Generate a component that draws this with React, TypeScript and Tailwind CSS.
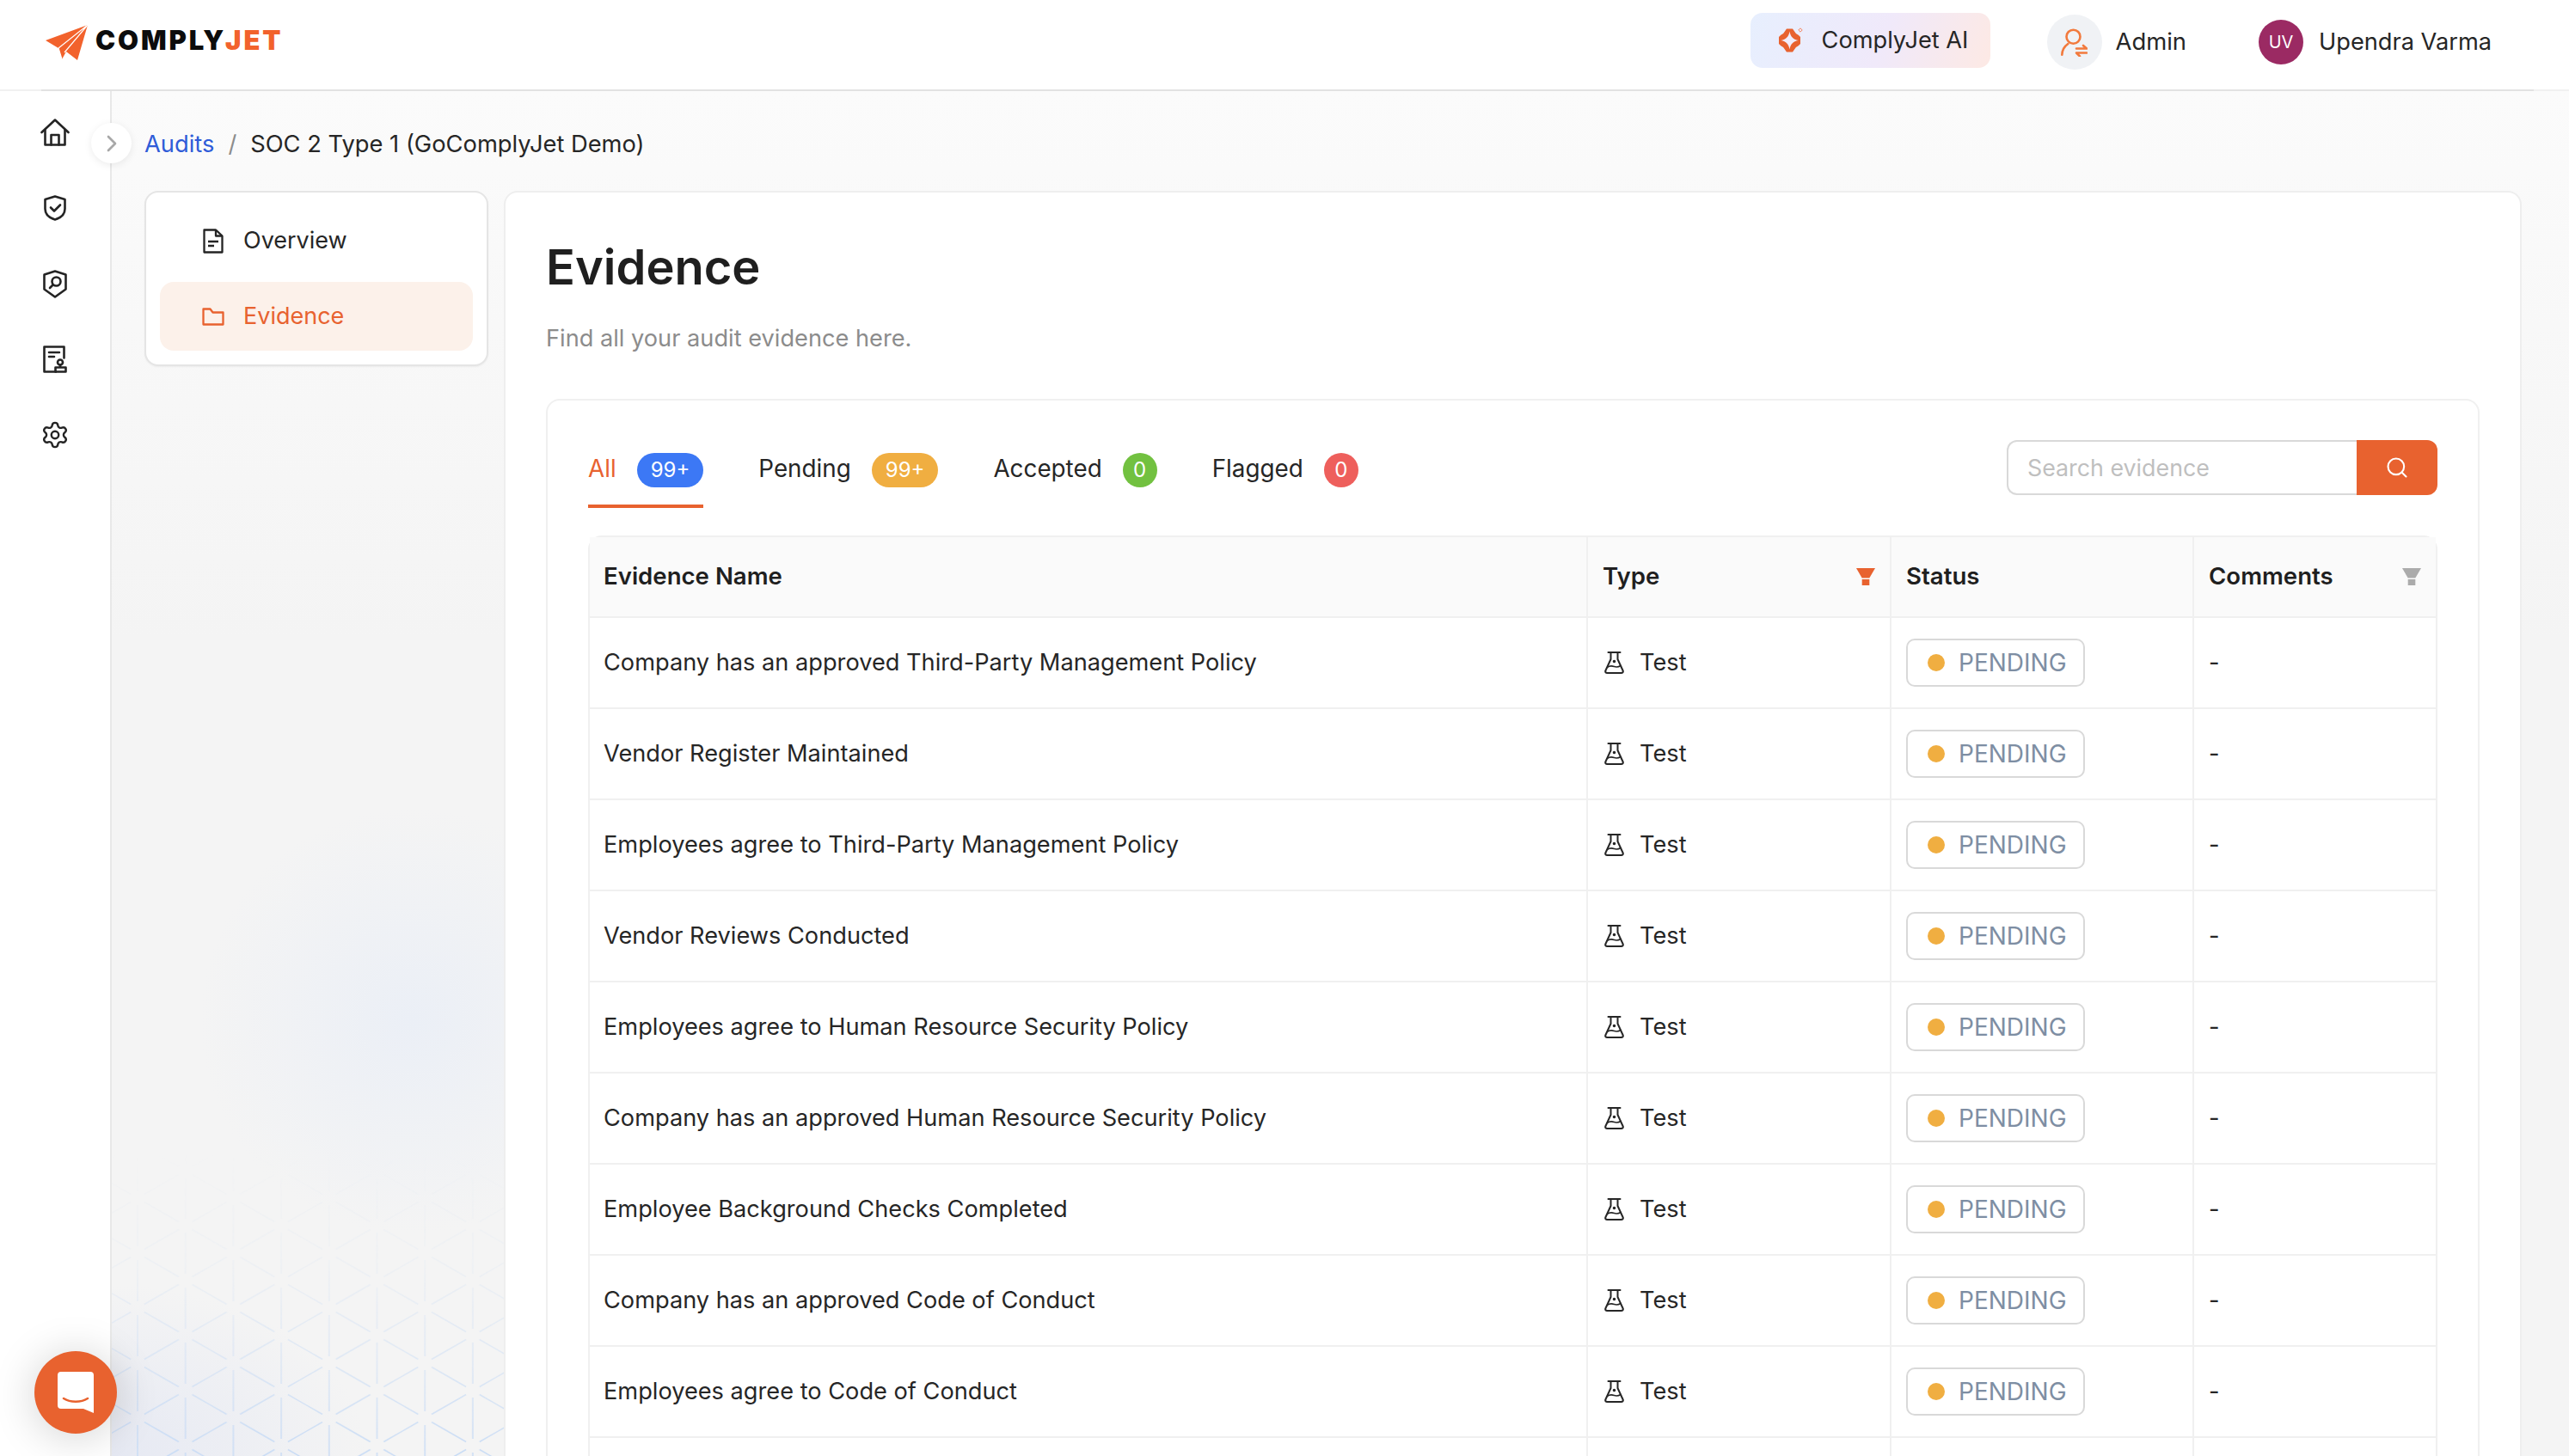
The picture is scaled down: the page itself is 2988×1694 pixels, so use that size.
import { Settings, Search, ChevronRight } from "lucide-react";

const rows = [
  "Company has an approved Third-Party Management Policy",
  "Vendor Register Maintained",
  "Employees agree to Third-Party Management Policy",
  "Vendor Reviews Conducted",
  "Employees agree to Human Resource Security Policy",
  "Company has an approved Human Resource Security Policy",
  "Employee Background Checks Completed",
  "Company has an approved Code of Conduct",
  "Employees agree to Code of Conduct",
];

const cols = "grid grid-cols-[1161px_353px_352px_1fr]";

function Plane() {
  return (
    <svg width="49" height="41" viewBox="0 0 49 41">
      <path d="M0 18 49 0 37 41 24 31 19 40 15 27Z" fill="#f2622c" />
      <path d="M49 0 15 27M49 0 22 32M15 27 19 40" stroke="#fff" strokeWidth="1.2" fill="none" />
    </svg>
  );
}

function AiIcon() {
  return (
    <svg width="30" height="30" viewBox="0 0 30 30">
      <path d="M11 1.500h7l3.500 5c1 1 2 1.500 3.500 2.500l2 2v8l-2 2c-1.500 1-2.500 1.500-3.500 2.500l-3.500 5h-7l-3.500-5C6.500 22.500 5.500 22 4 21l-2-2v-8l2-2c1.500-1 2.500-1.500 3.500-2.500Z" fill="#e8622f" />
      <path d="M14.500 4.500c1 6 4 9.400 10 10.500-6 1.100-9 4.500-10 10.500-1-6-4-9.400-10-10.500 6-1.100 9-4.500 10-10.500Z" fill="#f1ecfb" />
      <path d="M27 .8 29.200 3 27 5.200 24.800 3Z" fill="#f3ebf8" stroke="#f0865f" strokeWidth="1" />
    </svg>
  );
}

function AdminIcon() {
  return (
    <svg width="31" height="33" viewBox="0 0 31 33" fill="none" stroke="#f27a3d" strokeWidth="2.600" strokeLinecap="round" strokeLinejoin="round">
      <circle cx="14.500" cy="9.700" r="8" />
      <path d="M8.300 18C4 21 1.500 25 1.300 30.700" />
      <path d="M18 23.500h12l-4-3.500M30 28.500H18l4 4" />
    </svg>
  );
}

function HomeIcon() {
  return (
    <svg width="34" height="32" viewBox="0 0 34 32" fill="none" stroke="#242424" strokeWidth="2.600" strokeLinejoin="round" strokeLinecap="round">
      <path d="M1.500 16 17 1.500 32.500 16" />
      <path d="M5.500 13v17.500h23V13" />
      <path d="M12.500 30.500V19h9v11.500" />
    </svg>
  );
}

function ShieldCheck() {
  return (
    <svg width="26" height="30" viewBox="0 0 26 30" fill="none" stroke="#242424" strokeWidth="2.600" strokeLinejoin="round" strokeLinecap="round">
      <path d="M13 1.500 24.500 5v11c0 6.500-5 10.500-11.500 12.500C6.500 26.500 1.500 22.500 1.500 16V5Z" />
      <path d="m8 14.500 4 4 7-7" />
    </svg>
  );
}

function ShieldSearch() {
  return (
    <svg width="28" height="33" viewBox="0 0 28 33" fill="none" stroke="#242424" strokeWidth="2.600" strokeLinejoin="round" strokeLinecap="round">
      <path d="M14 1.500 26.500 5.500v17L14 31.500 1.500 22.500v-17Z" />
      <circle cx="15.500" cy="13.500" r="5" />
      <path d="m11.500 17.500-3.500 3.500" />
    </svg>
  );
}

function DocStamp() {
  return (
    <svg width="28" height="32" viewBox="0 0 28 32" fill="none" stroke="#242424" strokeWidth="2.600" strokeLinejoin="round" strokeLinecap="round">
      <path d="M15 30.500H1.500v-29h23v13" />
      <path d="M7 8h12M7 13h6" />
      <circle cx="20" cy="19.500" r="3" />
      <path d="M20 22.500V25M14.500 25.500h12v5h-12Z" />
    </svg>
  );
}

function OverviewIcon() {
  return (
    <svg width="24" height="29" viewBox="0 0 24 29" fill="none" stroke="#242424" strokeWidth="2.300" strokeLinejoin="round">
      <path d="M15 1.500H1.500v26h21V8.500Z" />
      <path d="M15 1.500v7h7.500M6 15h12M6 20h7" />
    </svg>
  );
}

function FolderIcon() {
  return (
    <svg width="26" height="21" viewBox="0 0 26 21" fill="none" stroke="#e8622f" strokeWidth="2.300" strokeLinejoin="round">
      <path d="M1.500 1.500h8l3 4h12v14h-23Z" />
    </svg>
  );
}

function Flask() {
  return (
    <svg width="23" height="26" viewBox="0 0 23 26" fill="none" stroke="#262626" strokeWidth="2" strokeLinejoin="round" strokeLinecap="round">
      <path d="M4.500 1h14M7.500 1v8L1.500 22c-.8 1.700 0 3 2 3h16c2 0 2.800-1.300 2-3L15.500 9V1" />
      <path d="M3.500 18.500c3-2.500 5-2 8-1s5 .5 7.500-1" strokeWidth="1.600" />
      <circle cx="11.500" cy="11.500" r=".8" fill="#262626" />
    </svg>
  );
}

function Funnel({ color }: { color: string }) {
  return (
    <svg width="22" height="20" viewBox="0 0 22 20" fill={color}>
      <path d="M0 0h22l-6.700 11.500H6.700Z" />
      <path d="M6.700 13h8.600v7H6.700Z" />
    </svg>
  );
}

function ChatIcon() {
  return (
    <svg width="42" height="48" viewBox="0 0 42 48">
      <path d="M4 0h34a4 4 0 0 1 4 4v44l-12-5H4a4 4 0 0 1-4-4V4a4 4 0 0 1 4-4Z" fill="#fff" />
      <path d="M7 31c8 5 20 5 28 0" fill="none" stroke="#e8622f" strokeWidth="2.600" strokeLinecap="round" />
    </svg>
  );
}

function Tab({ label, badge, color, active }: { label: string; badge: string; color: string; active?: boolean }) {
  return (
    <div className={`flex flex-col ${active ? "text-[#e8622f]" : "text-[#262626]"}`}>
      <div className="flex h-[40px] items-center gap-[24px]">
        <span className="pb-[4px] text-[27.8px] leading-[36px]">{label}</span>
        <span className={`flex h-[40px] min-w-[40px] items-center justify-center rounded-full text-[24px] leading-none text-white ${badge === "0" ? "px-0" : "px-[16px]"} ${color}`}>{badge}</span>
      </div>
      <div className={`mt-[20px] h-[4px] ${active ? "bg-[#e8622f]" : "bg-transparent"}`} />
    </div>
  );
}

export default function App() {
  return (
    <div className="relative flex h-[1694px] w-[2988px] flex-col overflow-hidden bg-white font-['Inter',sans-serif] text-[#262626]">
      <header className="flex h-[104px] items-center justify-between bg-white pb-[6px] pl-[53px] pr-[90px]">
        <div className="flex items-center gap-[9px]">
          <Plane />
          <span className="pb-[6px] text-[31px] font-black leading-none tracking-[2.900px]">
            <span className="text-[#0c0c0c]">COMPLY</span>
            <span className="text-[#f2622c]">JET</span>
          </span>
        </div>
        <div className="flex items-center">
          <button className="mb-[4px] flex h-[64px] w-[279px] items-center gap-[22px] rounded-[14px] bg-[linear-gradient(110deg,#e7effe_0%,#f0e9fa_55%,#fde9e4_100%)] pl-[31px] text-[27.2px]">
            <AiIcon />
            <span>ComplyJet AI</span>
          </button>
          <div className="ml-[66px] flex items-center gap-[16px]">
            <span className="flex h-[64px] w-[64px] items-center justify-center rounded-full bg-[#f0f2f5]">
              <AdminIcon />
            </span>
            <span className="text-[27.4px]">Admin</span>
          </div>
          <div className="ml-[84px] flex items-center gap-[18px]">
            <span className="flex h-[52px] w-[52px] items-center justify-center rounded-full bg-[#9b2a63] text-[20px] text-white">UV</span>
            <span className="text-[27.2px]">Upendra Varma</span>
          </div>
        </div>
      </header>
      <div className="h-[2px] bg-[#f1f1f1]">
        <div className="ml-[48px] mr-[41px] h-[2px] bg-[#e2e2e2]" />
      </div>

      <div className="flex min-h-0 flex-1">
        <aside className="flex w-[130px] shrink-0 flex-col items-center border-r-2 border-[#e8e8e8] bg-white pt-[32px]">
          <div className="flex h-[32px] items-center justify-center"><HomeIcon /></div>
          <div className="mt-[56px] flex h-[32px] items-center justify-center"><ShieldCheck /></div>
          <div className="mt-[56px] flex h-[32px] items-center justify-center"><ShieldSearch /></div>
          <div className="mt-[56px] flex h-[32px] items-center justify-center"><DocStamp /></div>
          <div className="mt-[56px] flex h-[32px] items-center justify-center">
            <Settings size={34} strokeWidth={1.700} color="#242424" />
          </div>
        </aside>

        <main className="relative min-w-0 flex-1 overflow-hidden bg-[linear-gradient(180deg,#fbfbfb_0%,#f4f4f4_40%)] pl-[38px] pr-[55px] pt-[40px]">
          <div className="absolute left-[0px] top-[732px] h-[700px] w-[700px] bg-[radial-gradient(circle,#ebeff6_0%,rgba(235,239,246,0)_50%)]" />
          <div className="absolute bottom-0 left-0 h-[200px] w-[300px] bg-[radial-gradient(ellipse_at_bottom_left,#e6e9f3_0%,rgba(230,233,243,0)_70%)]" />
          <svg width="456" height="440" className="absolute bottom-0 left-0 [mask-image:linear-gradient(to_top,black_0%,rgba(0,0,0,0.5)_25%,rgba(0,0,0,0.15)_50%,transparent_80%)]">
            <defs>
              <pattern id="tri" x="2.150" y="12" width="111.400" height="64" patternUnits="userSpaceOnUse">
                <path
                  d="M35.650 4.500 75.750 27.500M75.750 36.500 35.650 59.500M20.050 4.500-20.050 27.500M20.050 59.500-20.050 36.500M91.350 27.500 131.450 4.500M91.350 36.500 131.450 59.500M27.850 8V56M83.550 40V64M83.550 0V24"
                  stroke="#c9dcf5"
                  strokeWidth="1.500"
                  fill="none"
                />
              </pattern>
            </defs>
            <rect width="456" height="440" fill="url(#tri)" />
          </svg>

          <div className="relative">
            <nav className="flex h-[44px] items-center text-[27.3px]">
              <span className="text-[#2f5cd8]">Audits</span>
              <span className="mx-[16px] text-[#8c8c8c]">/</span>
              <span>SOC 2 Type 1 (GoComplyJet Demo)</span>
            </nav>

            <div className="mt-[32px] flex items-start gap-[18px]">
              <div className="w-[400px] shrink-0 rounded-[16px] border-2 border-[#e5e5e5] bg-white p-[16px] shadow-[0_1px_2px_rgba(0,0,0,0.05)]">
                <div className="flex h-[80px] items-center gap-[22px] pl-[49px] text-[27px]">
                  <span className="flex w-[26px] justify-center"><OverviewIcon /></span>
                  <span>Overview</span>
                </div>
                <div className="mt-[8px] flex h-[80px] items-center gap-[22px] rounded-[16px] bg-[#fcf1ea] pl-[49px] text-[27px] text-[#e8622f]">
                  <span className="flex w-[26px] justify-center"><FolderIcon /></span>
                  <span>Evidence</span>
                </div>
              </div>

              <section className="min-w-0 flex-1 rounded-t-[16px] border-2 border-[#eeeeee] bg-white px-[47px] pt-[51px]">
                <h1 className="text-[56px] font-semibold leading-[72px] text-[#1f1f1f]">Evidence</h1>
                <p className="mt-[27px] text-[27.2px] leading-[40px] text-[#8c8c8c]">Find all your audit evidence here.</p>

                <div className="mt-[50px] rounded-t-[16px] border-2 border-[#f0f0f0] px-[47px] pt-[46px]">
                  <div className="flex items-start justify-between">
                    <div className="mt-[15px] flex gap-[64px]">
                      <Tab label="All" badge="99+" color="bg-[#3c78f5]" active />
                      <Tab label="Pending" badge="99+" color="bg-[#f0ae41]" />
                      <Tab label="Accepted" badge="0" color="bg-[#72c140]" />
                      <Tab label="Flagged" badge="0" color="bg-[#ee5f5c]" />
                    </div>
                    <div className="flex h-[64px] w-[501px]">
                      <div className="flex flex-1 items-center rounded-l-[12px] border-2 border-r-0 border-[#d9d9d9] pl-[22px] text-[26.8px] text-[#bfbfbf]">Search evidence</div>
                      <div className="flex w-[94px] items-center justify-center rounded-r-[12px] bg-[#e8622f]">
                        <Search size={28} color="#fff" strokeWidth={1.800} />
                      </div>
                    </div>
                  </div>

                  <div className="mt-[32px] rounded-t-[16px] border-2 border-[#f0f0f0]">
                    <div className={`${cols} h-[94px] border-b-2 border-[#f0f0f0] bg-[#fafafa] text-[27.6px] font-semibold text-[#1f1f1f]`}>
                      <div className="flex items-center border-r-2 border-[#f0f0f0] pl-[16px]">Evidence Name</div>
                      <div className="flex items-center justify-between border-r-2 border-[#f0f0f0] pl-[17px] pr-[17px]">
                        <span>Type</span>
                        <Funnel color="#e8622f" />
                      </div>
                      <div className="flex items-center border-r-2 border-[#f0f0f0] pl-[17px]">Status</div>
                      <div className="flex items-center justify-between pl-[17px] pr-[17px]">
                        <span>Comments</span>
                        <Funnel color="#ababab" />
                      </div>
                    </div>
                    {rows.map((name) => (
                      <div key={name} className={`${cols} h-[106px] border-b-2 border-[#f0f0f0] text-[27.2px]`}>
                        <div className="flex items-center border-r-2 border-[#f0f0f0] pl-[16px]">{name}</div>
                        <div className="flex items-center gap-[18px] border-r-2 border-[#f0f0f0] pl-[19px]">
                          <Flask />
                          <span>Test</span>
                        </div>
                        <div className="flex items-center border-r-2 border-[#f0f0f0] pl-[17px]">
                          <div className="flex h-[56px] w-[208px] items-center gap-[16px] rounded-[10px] border-2 border-[#d9d9d9] pl-[23px]">
                            <span className="h-[20px] w-[20px] rounded-full bg-[#f0ae41]" />
                            <span className="text-[28px] text-[#7e8ea3]">PENDING</span>
                          </div>
                        </div>
                        <div className="flex items-center pl-[17px]">-</div>
                      </div>
                    ))}
                    <div className={`${cols} h-[106px]`}>
                      <div className="border-r-2 border-[#f0f0f0]" />
                      <div className="border-r-2 border-[#f0f0f0]" />
                      <div className="border-r-2 border-[#f0f0f0]" />
                      <div />
                    </div>
                  </div>
                </div>
              </section>
            </div>
          </div>
        </main>
      </div>

      <button className="absolute left-[106px] top-[143px] flex h-[47px] w-[47px] items-center justify-center rounded-full bg-white shadow-[0_2px_10px_rgba(0,0,0,0.08)]">
        <ChevronRight size={32} color="#a8a8a8" strokeWidth={2} />
      </button>

      <button className="absolute left-[40px] top-[1572px] flex h-[96px] w-[96px] items-center justify-center rounded-full bg-[#e8622f] shadow-[0_4px_50px_rgba(0,0,0,0.18)]">
        <ChatIcon />
      </button>
    </div>
  );
}
